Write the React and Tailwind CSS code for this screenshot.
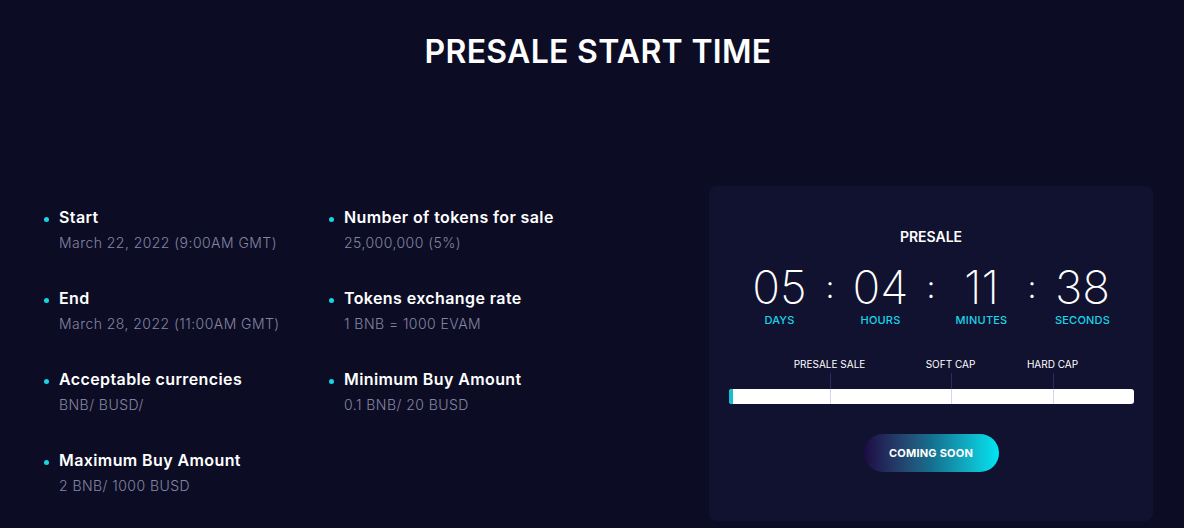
import React from "react";

const items = [
  [
    { title: "Start", value: "March 22, 2022 (9:00AM GMT)" },
    { title: "End", value: "March 28, 2022 (11:00AM GMT)" },
    { title: "Acceptable currencies", value: "BNB/ BUSD/" },
    { title: "Maximum Buy Amount", value: "2 BNB/ 1000 BUSD" },
  ],
  [
    { title: "Number of tokens for sale", value: "25,000,000 (5%)" },
    { title: "Tokens exchange rate", value: "1 BNB = 1000 EVAM" },
    { title: "Minimum Buy Amount", value: "0.1 BNB/ 20 BUSD" },
  ],
];

const countdown = [
  { value: "05", label: "DAYS" },
  { value: "04", label: "HOURS" },
  { value: "11", label: "MINUTES" },
  { value: "38", label: "SECONDS" },
];

function InfoItem({ title, value }) {
  return (
    <li className="flex items-start h-[81px]">
      <span className="mt-[10px] mr-[10px] w-[5px] h-[5px] rounded-full bg-[#19d3e6] shrink-0" />
      <div>
        <div className="text-[16px] leading-[21px] font-semibold text-white tracking-[0.4px]">{title}</div>
        <div className="mt-[5px] text-[14px] leading-[20px] font-light text-[#8584a3] tracking-[0.45px]">{value}</div>
      </div>
    </li>
  );
}

export default function App() {
  return (
    <div
      className="w-[1184px] h-[528px] bg-[#0c0d24] overflow-hidden"
      style={{ fontFamily: "Inter, 'Noto Sans', sans-serif" }}
    >
      <h1 className="pt-[33px] pl-[12px] text-center text-[32px] leading-[38px] font-semibold text-white tracking-[0.3px]">
        PRESALE START TIME
      </h1>

      <div className="flex mt-[115px]">
        <ul className="ml-[44px] mt-[21px] w-[285px]">
          {items[0].map((it) => (
            <InfoItem key={it.title} {...it} />
          ))}
        </ul>
        <ul className="mt-[21px] w-[380px]">
          {items[1].map((it) => (
            <InfoItem key={it.title} {...it} />
          ))}
        </ul>

        <div className="w-[444px] h-[335px] rounded-[8px] bg-[#111230] flex flex-col items-center">
          <div className="mt-[42px] text-[14px] leading-[18px] font-semibold text-white">PRESALE</div>

          <div className="mt-[16px] flex items-start">
            {countdown.map((c, i) => (
              <React.Fragment key={c.label}>
                {i > 0 && (
                  <div className="w-[0px] flex justify-center">
                    <span className="text-[30px] leading-[50px] font-light text-white">:</span>
                  </div>
                )}
                <div className="w-[101px] flex flex-col items-center">
                  <span className="text-[46px] leading-[50px] font-extralight text-white">{c.value}</span>
                  <span className="mt-[1px] text-[11px] leading-[14px] font-medium text-[#19d5e8] tracking-[0.2px]">{c.label}</span>
                </div>
              </React.Fragment>
            ))}
          </div>

          <div className="mt-[30px] w-[405px]">
            <div className="relative h-[32px]">
              <span className="absolute left-[101px] -translate-x-1/2 top-[0px] text-[10px] leading-[14px] text-white whitespace-nowrap">PRESALE SALE</span>
              <span className="absolute left-[222px] -translate-x-1/2 top-[0px] text-[10px] leading-[14px] text-white whitespace-nowrap">SOFT CAP</span>
              <span className="absolute left-[324px] -translate-x-1/2 top-[0px] text-[10px] leading-[14px] text-white whitespace-nowrap">HARD CAP</span>
              <span className="absolute left-[101px] top-[16px] w-px h-[16px] bg-[#2f2a66]" />
              <span className="absolute left-[222px] top-[16px] w-px h-[16px] bg-[#2f2a66]" />
              <span className="absolute left-[324px] top-[16px] w-px h-[16px] bg-[#2f2a66]" />
            </div>
            <div className="relative h-[15px] rounded-[3px] bg-white overflow-hidden">
              <div className="h-full w-[4px] bg-[#15bfd0]" />
              <span className="absolute left-[101px] top-0 w-px h-full bg-[#d9d2f5]" />
              <span className="absolute left-[222px] top-0 w-px h-full bg-[#d9d2f5]" />
              <span className="absolute left-[324px] top-0 w-px h-full bg-[#d9d2f5]" />
            </div>
          </div>

          <button className="mt-[30px] w-[135px] h-[38px] rounded-full bg-gradient-to-r from-[#1c0a44] via-[#13708f] to-[#00e6f2] text-white text-[11px] font-bold tracking-[0.2px]">
            COMING SOON
          </button>
        </div>
      </div>
    </div>
  );
}
